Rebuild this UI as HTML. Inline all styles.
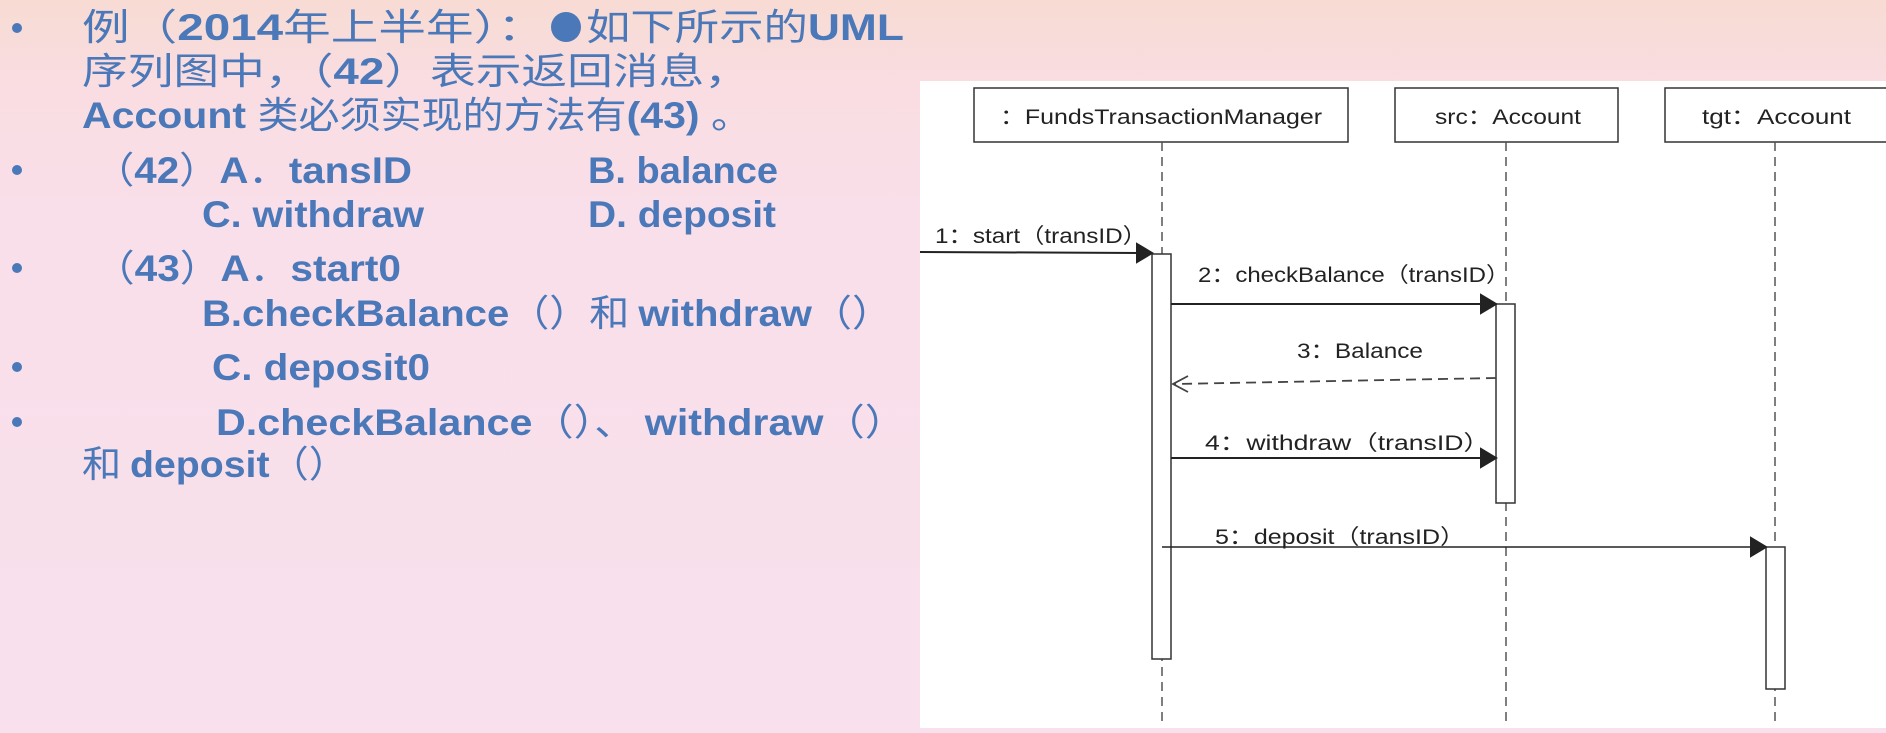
<!DOCTYPE html>
<html><head><meta charset="utf-8"><style>
html,body{margin:0;padding:0;width:1886px;height:733px;overflow:hidden}
body{background:linear-gradient(180deg,#f8dbd3 0%,#f9dde2 12%,#f9dfea 30%,#f8e0ec 100%)}
svg{position:absolute;left:0;top:0}
.t{font-family:"Liberation Sans","Noto Sans CJK SC",sans-serif;font-size:37px;fill:#4a78b8;font-weight:bold}
.t .c{font-weight:normal;font-family:"Noto Sans CJK SC",sans-serif}
.d{font-family:"Liberation Sans","Noto Sans CJK SC",sans-serif;font-size:21px;fill:#222}
</style></head><body>
<svg width="1886" height="733" viewBox="0 0 1886 733">
<g fill="#4a78b8">
<circle cx="17" cy="28" r="5"/><circle cx="17" cy="170" r="5"/><circle cx="17" cy="268" r="5"/><circle cx="17" cy="367" r="5"/><circle cx="17" cy="422" r="5"/>
<circle cx="566" cy="27" r="15"/>
</g>
<g class="t">
<text x="82" y="40" textLength="463" lengthAdjust="spacingAndGlyphs"><tspan class="c">例（</tspan>2014<tspan class="c">年上半年）：</tspan></text>
<text x="586" y="40" textLength="318" lengthAdjust="spacingAndGlyphs"><tspan class="c">如下所示的</tspan>UML</text>
<text x="82" y="84" textLength="668" lengthAdjust="spacingAndGlyphs"><tspan class="c">序列图中，（</tspan>42<tspan class="c">）表示返回消息，</tspan></text>
<text x="82" y="128" textLength="670" lengthAdjust="spacingAndGlyphs">Account <tspan class="c">类必须实现的方法有</tspan>(43) <tspan class="c">。</tspan></text>
<text x="94" y="183" textLength="318" lengthAdjust="spacingAndGlyphs"><tspan class="c">（</tspan>42<tspan class="c">）</tspan>A<tspan class="c">．</tspan>tansID</text>
<text x="588" y="183" textLength="190" lengthAdjust="spacingAndGlyphs">B. balance</text>
<text x="202" y="227" textLength="222" lengthAdjust="spacingAndGlyphs">C. withdraw</text>
<text x="588" y="227" textLength="188" lengthAdjust="spacingAndGlyphs">D. deposit</text>
<text x="94" y="281" textLength="307" lengthAdjust="spacingAndGlyphs"><tspan class="c">（</tspan>43<tspan class="c">）</tspan>A<tspan class="c">．</tspan>start0</text>
<text x="202" y="326" textLength="690" lengthAdjust="spacingAndGlyphs">B.checkBalance<tspan class="c">（）和 </tspan>withdraw<tspan class="c">（）</tspan></text>
<text x="212" y="380" textLength="218" lengthAdjust="spacingAndGlyphs">C.  deposit0</text>
<text x="216" y="435" textLength="690" lengthAdjust="spacingAndGlyphs">D.checkBalance<tspan class="c">（）、 </tspan>withdraw<tspan class="c">（）</tspan></text>
<text x="82" y="477" textLength="266" lengthAdjust="spacingAndGlyphs"><tspan class="c">和 </tspan>deposit<tspan class="c">（）</tspan></text>
</g>
<rect x="920" y="81" width="966" height="647" fill="#fff"/>
<g stroke="#333" stroke-width="1.5" fill="#fff">
<rect x="974" y="88" width="374" height="54"/>
<rect x="1395" y="88" width="223" height="54"/>
<rect x="1665" y="88" width="230" height="54"/>
</g>
<g stroke="#555" stroke-width="1.5" stroke-dasharray="9,6">
<line x1="1162" y1="142" x2="1162" y2="722"/>
<line x1="1506" y1="142" x2="1506" y2="722"/>
<line x1="1775" y1="142" x2="1775" y2="722"/>
</g>
<g stroke="#333" stroke-width="1.5" fill="#fff">
<rect x="1152" y="254" width="19" height="405"/>
<rect x="1496" y="304" width="19" height="199"/>
<rect x="1766" y="547" width="19" height="142"/>
</g>
<g stroke="#222" stroke-width="2" fill="#222">
<line x1="920" y1="252" x2="1140" y2="253"/><path d="M1137 244 L1152 253 L1137 262Z"/>
<line x1="1171" y1="304" x2="1484" y2="304"/><path d="M1481 295 L1496 304 L1481 313Z"/>
<line x1="1171" y1="458" x2="1484" y2="458"/><path d="M1481 449 L1496 458 L1481 467Z"/>
<line x1="1162" y1="547" x2="1754" y2="547" stroke-width="1.5"/><path d="M1751 538 L1766 547 L1751 556Z"/>
</g>
<g stroke="#444" stroke-width="1.8" fill="none">
<line x1="1496" y1="378" x2="1174" y2="384" stroke-dasharray="10,6"/>
<path d="M1188 376 L1173 384 L1188 392"/>
</g>
<g class="d">
<text x="1000" y="124" textLength="322" lengthAdjust="spacingAndGlyphs">：FundsTransactionManager</text>
<text x="1435" y="124" textLength="146" lengthAdjust="spacingAndGlyphs">src：Account</text>
<text x="1702" y="124" textLength="149" lengthAdjust="spacingAndGlyphs">tgt：Account</text>
<text x="935" y="243" textLength="212" lengthAdjust="spacingAndGlyphs">1：start（transID）</text>
<text x="1198" y="282" textLength="312" lengthAdjust="spacingAndGlyphs">2：checkBalance（transID）</text>
<text x="1297" y="358" textLength="126" lengthAdjust="spacingAndGlyphs">3：Balance</text>
<text x="1205" y="450" textLength="285" lengthAdjust="spacingAndGlyphs">4：withdraw（transID）</text>
<text x="1215" y="544" textLength="250" lengthAdjust="spacingAndGlyphs">5：deposit（transID）</text>
</g>
</svg>
</body></html>
